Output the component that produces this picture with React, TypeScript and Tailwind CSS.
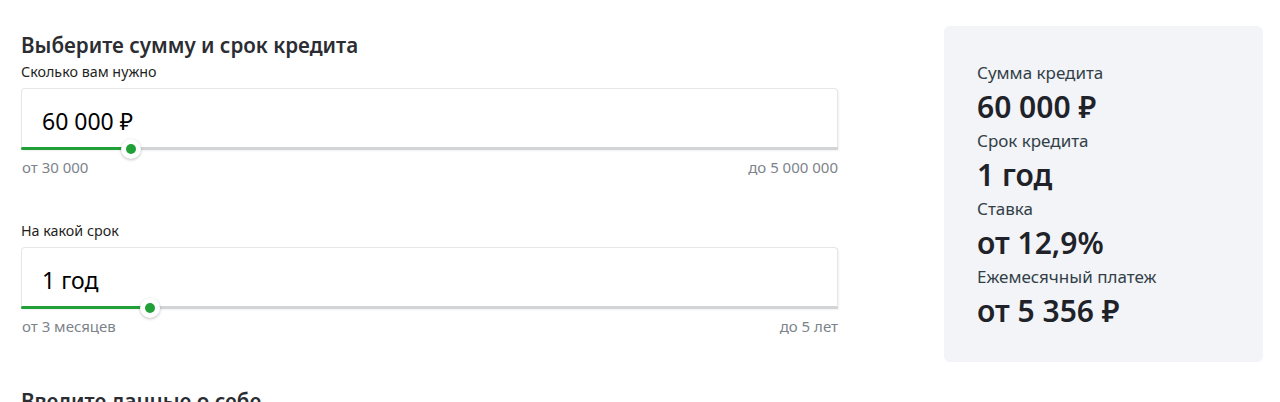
import React from "react";

function Slider({ value, pct, min, max }: { value: string; pct: number; min: string; max: string }) {
  return (
    <div>
      <div className="relative h-[62px] rounded-t-[4px] border border-b-0 border-[#e4e6e8] bg-white shadow-[1px_1px_2px_rgba(0,0,0,0.06)]">
        <div className="flex h-[59px] items-center pl-[20px] pt-[5px] text-[23px] text-[#000000]">{value}</div>
        <div className="absolute bottom-0 left-[-1px] right-[-1px] h-[3px] rounded-[2px] bg-[#d3d4d6]">
          <div className="h-full rounded-l-[2px] bg-[#21a038]" style={{ width: `${pct}px` }} />
          <div
            className="absolute top-1/2 flex h-[20px] w-[20px] -translate-x-1/2 -translate-y-1/2 items-center justify-center rounded-full bg-white shadow-[0_1px_3px_rgba(0,0,0,0.25)]"
            style={{ left: `${pct}px` }}
          >
            <div className="h-[10px] w-[10px] rounded-full bg-[#21a038]" />
          </div>
        </div>
      </div>
      <div className="mt-[9px] flex justify-between text-[15px] leading-4 text-[#7d838a]">
        <span className="pl-[1px]">{min}</span>
        <span>{max}</span>
      </div>
    </div>
  );
}

export default function App() {
  return (
    <div
      className="h-[402px] w-[1280px] overflow-hidden bg-white text-[#1f1f22]"
      style={{ fontFamily: '"Noto Sans", "Open Sans", sans-serif' }}
    >
      <div className="flex pl-[21px] pr-[17px]">
        <div className="w-[817px] pt-[33px]">
          <h2 className="text-[20.6px] font-semibold leading-6 text-[#2b2d33]">Выберите сумму и срок кредита</h2>
          <div className="mt-[7px] mb-2 text-[14.3px] leading-4">Сколько вам нужно</div>
          <Slider value="60 000 ₽" pct={110} min="от 30 000" max="до 5 000 000" />
          <div className="mt-[48px] mb-2 text-[14.3px] leading-4">На какой срок</div>
          <Slider value="1 год" pct={129} min="от 3 месяцев" max="до 5 лет" />
          <h2 className="mt-[55px] text-[20.6px] font-semibold leading-6 text-[#2b2d33]">Введите данные о себе</h2>
        </div>
        <div className="ml-auto mt-[26px] h-[336px] w-[319px] rounded-[6px] bg-[#f2f4f7] px-[33px] py-[33px]">
          {[
            ["Сумма кредита", "60 000 ₽"],
            ["Срок кредита", "1 год"],
            ["Ставка", "от 12,9%"],
            ["Ежемесячный платеж", "от 5 356 ₽"],
          ].map(([l, v]) => (
            <div key={l}>
              <div className="text-[17px] leading-[28px] text-[#333f48]">{l}</div>
              <div className="text-[30px] font-semibold leading-[40px] text-[#1f2329]">{v}</div>
            </div>
          ))}
        </div>
      </div>
    </div>
  );
}
